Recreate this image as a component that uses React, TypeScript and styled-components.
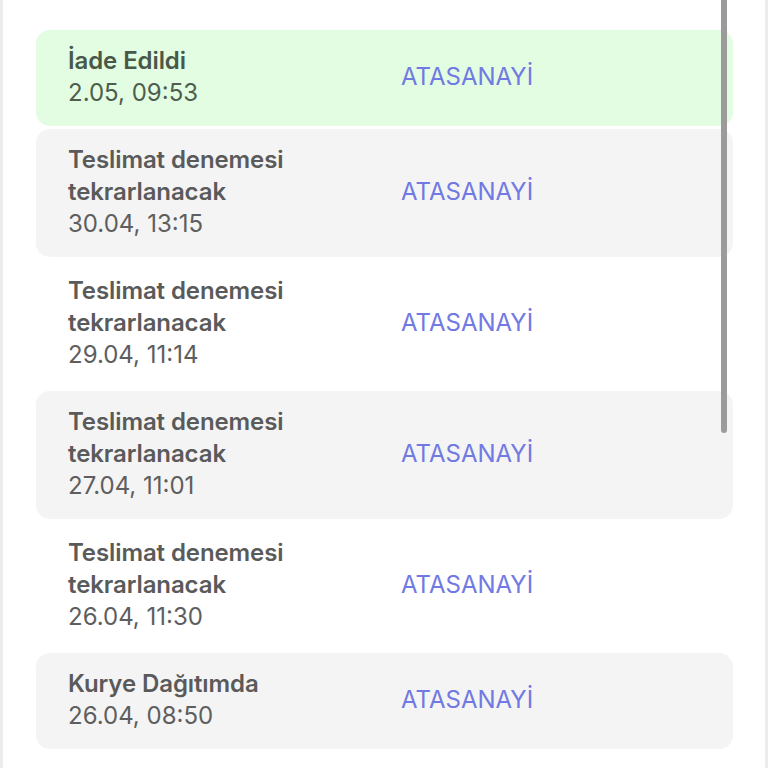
import React from 'react'
import styled, { createGlobalStyle } from 'styled-components'

interface TrackingEvent {
  status: string;
  date: string;
  location: string;
}

const events: TrackingEvent[] = [
  { status: 'İade Edildi', date: '2.05, 09:53', location: 'ATASANAYİ' },
  { status: 'Teslimat denemesi tekrarlanacak', date: '30.04, 13:15', location: 'ATASANAYİ' },
  { status: 'Teslimat denemesi tekrarlanacak', date: '29.04, 11:14', location: 'ATASANAYİ' },
  { status: 'Teslimat denemesi tekrarlanacak', date: '27.04, 11:01', location: 'ATASANAYİ' },
  { status: 'Teslimat denemesi tekrarlanacak', date: '26.04, 11:30', location: 'ATASANAYİ' },
  { status: 'Kurye Dağıtımda', date: '26.04, 08:50', location: 'ATASANAYİ' },
]

type Tone = 'current' | 'shaded' | 'plain'

const toneFor = (i: number): Tone => (i === 0 ? 'current' : i % 2 === 1 ? 'shaded' : 'plain')

export default function App() {
  return (
    <>
      <GlobalStyle />
      <Screen>
        <Timeline>
          {events.map((ev, i) => (
            <EventCard key={i} $tone={toneFor(i)}>
              <Info>
                <Status $tone={toneFor(i)}>{ev.status}</Status>
                <DateText $tone={toneFor(i)}>{ev.date}</DateText>
              </Info>
              <Location>{ev.location}</Location>
            </EventCard>
          ))}
        </Timeline>
        <Scrollbar />
      </Screen>
    </>
  )
}

const GlobalStyle = createGlobalStyle`
  html, body {
    margin: 0;
    padding: 0;
    background: #ffffff;
    overflow: hidden;
  }
  body {
    font-family: Inter, "Noto Sans", sans-serif;
  }
`

const Screen = styled.div`
  position: relative;
  height: 768px;
  box-sizing: border-box;
  border-left: 3px solid #ececec;
  border-right: 3px solid #ececec;
  background: #ffffff;
  overflow: hidden;
`

const Timeline = styled.div`
  display: flex;
  flex-direction: column;
  gap: 3px;
  padding: 30px 32px 0 33px;
`

const EventCard = styled.div<{ $tone: Tone }>`
  display: grid;
  grid-template-columns: 333px 1fr;
  align-items: center;
  padding: 15px 32px 17px;
  border-radius: 14px;
  background: ${p => (p.$tone === 'current' ? '#e2fde1' : p.$tone === 'shaded' ? '#f4f4f4' : 'transparent')};
`

const Info = styled.div`
  display: flex;
  flex-direction: column;
`

const Status = styled.div<{ $tone: Tone }>`
  font-size: 24px;
  line-height: 32px;
  font-weight: 600;
  letter-spacing: -0.1px;
  color: ${p => (p.$tone === 'current' ? '#4a584a' : '#5a5a5a')};
  max-width: 250px;
`

const DateText = styled.div<{ $tone: Tone }>`
  font-size: 24px;
  line-height: 32px;
  font-weight: 400;
  color: ${p => (p.$tone === 'current' ? '#4f5d4f' : '#5e5e5e')};
`

const Location = styled.div`
  font-size: 24px;
  line-height: 32px;
  color: #7179e2;
`

const Scrollbar = styled.div`
  position: absolute;
  top: 0;
  left: 718px;
  width: 6px;
  height: 433px;
  background: #9b9b9b;
  border-radius: 0 0 3px 3px;
`
